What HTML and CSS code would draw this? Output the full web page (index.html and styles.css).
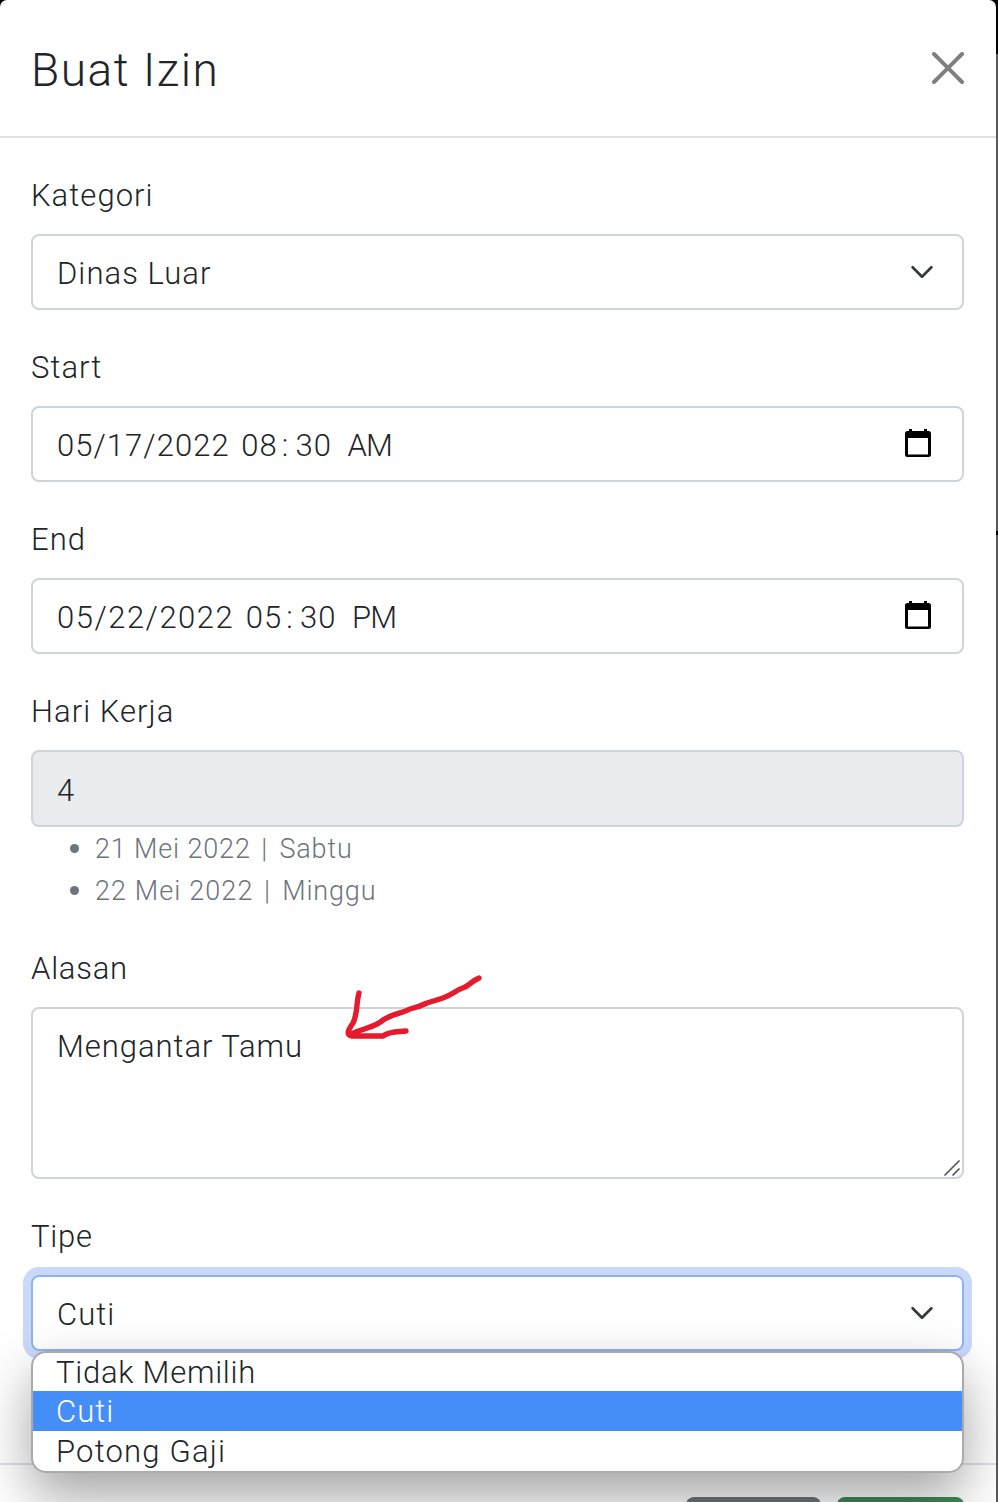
FILE: index.html
```html
<!DOCTYPE html>
<html lang="id">
<head>
<meta charset="utf-8">
<title>Buat Izin</title>
<link rel="stylesheet" href="styles.css">
</head>
<body>
<div class="backdrop">
  <div class="modal">
    <div class="modal-header">
      <h1 class="modal-title">Buat Izin</h1>
      <svg class="close" width="32" height="32" viewBox="0 0 16 16"><path d="M.293.293a1 1 0 0 1 1.414 0L8 6.586 14.293.293a1 1 0 1 1 1.414 1.414L9.414 8l6.293 6.293a1 1 0 0 1-1.414 1.414L8 9.414l-6.293 6.293a1 1 0 0 1-1.414-1.414L6.586 8 .293 1.707a1 1 0 0 1 0-1.414z"/></svg>
    </div>
    <div class="modal-body">
      <div class="group">
        <div class="label"><span>Kategori</span></div>
        <div class="control"><span>Dinas Luar</span>
          <svg class="chevron" width="32" height="24" viewBox="0 0 16 12"><path d="M3.300 3.650l4.700 4.700 4.700-4.700"/></svg></div>
      </div>
      <div class="group">
        <div class="label"><span>Start</span></div>
        <div class="control"><span><span class="date-part">05/17/2022</span> 08<span class="colon">:</span>30 <span class="meridiem">AM</span></span>
          <svg class="calendar" width="26" height="28" viewBox="0 0 26 28"><path fill-rule="evenodd" d="M4 0h3v2h12V0h3v2h1.500a2.500 2.500 0 0 1 2.500 2.500v21a2.500 2.500 0 0 1-2.500 2.500h-21A2.500 2.500 0 0 1 0 25.500v-21A2.500 2.500 0 0 1 2.500 2H4zM3 9v16.500h20V9z"/></svg></div>
      </div>
      <div class="group">
        <div class="label"><span>End</span></div>
        <div class="control"><span><span class="date-part date-end">05/22/2022</span> 05<span class="colon">:</span>30 <span class="meridiem">PM</span></span>
          <svg class="calendar" width="26" height="28" viewBox="0 0 26 28"><path fill-rule="evenodd" d="M4 0h3v2h12V0h3v2h1.500a2.500 2.500 0 0 1 2.500 2.500v21a2.500 2.500 0 0 1-2.500 2.500h-21A2.500 2.500 0 0 1 0 25.500v-21A2.500 2.500 0 0 1 2.500 2H4zM3 9v16.500h20V9z"/></svg></div>
      </div>
      <div class="group">
        <div class="label"><span>Hari Kerja</span></div>
        <div class="control readonly"><span>4</span></div>
        <ul class="days">
          <li>21 Mei 2022 <span class="bar">|</span> Sabtu</li>
          <li><span class="day-wide">22 Mei 2022</span> <span class="bar">|</span> Minggu</li>
        </ul>
      </div>
      <div class="group">
        <div class="label"><span class="snug">Alasan</span></div>
        <div class="control area"><span class="reason">Mengantar Tamu</span>
          <svg class="grip" width="18" height="18" viewBox="0 0 18 18"><path d="M1.500 16.500l15-15M9.500 16.500l7-7"/></svg>
          <svg class="arrow" width="140" height="70" viewBox="0 0 140 70"><path d="M134 8C127 11 126 14 120 17C111 20 107 25 98 28L82 33C76 36 73 37 65 39C58 43 47 44 38 50C31 57 19 58 6 64M14 23C11 33 13 43 8 53C4 59 0 65 7 66H38C45 61 52 62 61 61"/></svg>
        </div>
      </div>
      <div class="group">
        <div class="label"><span class="snug">Tipe</span></div>
        <div class="control focus"><span>Cuti</span>
          <svg class="chevron" width="32" height="24" viewBox="0 0 16 12"><path d="M3.300 3.650l4.700 4.700 4.700-4.700"/></svg>
          <div class="menu">
            <div class="option"><span class="snug">Tidak Memilih</span></div>
            <div class="option selected"><span>Cuti</span></div>
            <div class="option"><span class="wide">Potong Gaji</span></div>
          </div>
        </div>
      </div>
    </div>
    <div class="modal-footer">
      <div class="button cancel"></div>
      <div class="button save"></div>
    </div>
  </div>
  <div class="edge"><div class="edge-top"></div><div class="edge-mark"></div></div>
</div>
</body>
</html>
```
FILE: styles.css
```css
* { box-sizing: border-box; }
body { margin: 0; background: #000; }
.backdrop { display: flex; width: 998px; height: 1502px; overflow: hidden; color: #212529; font: 300 31px/48px Roboto, "Open Sans", sans-serif; letter-spacing: 1.05px; white-space: nowrap; }
.modal { width: 996px; height: 1530px; flex: none; display: flex; flex-direction: column; background: #fff; border-radius: 7px 7px 0 0; }
.modal-header { height: 138px; flex: none; display: flex; justify-content: space-between; align-items: center; padding: 0 32px 0 31px; border-bottom: 2px solid #dee2e6; }
.modal-title { margin: 0; padding-top: 4px; font-size: 46px; font-weight: 300; line-height: 60px; letter-spacing: 1.55px; }
.close { fill: #808080; }
.modal-body { height: 1325px; flex: none; padding: 32px 32px 0 31px; }
.group { margin-bottom: 32px; }
.label { height: 48px; margin-bottom: 16px; padding-top: 2px; }
.control { position: relative; height: 76px; display: flex; align-items: center; justify-content: space-between; padding: 3px 24px 0; border: 2px solid #ced4da; border-radius: 8px; }
.chevron { margin-top: -4px; fill: none; stroke: #343a40; stroke-width: 1.35; stroke-linecap: round; stroke-linejoin: round; }
.calendar { margin: -5px 7px 0 0; fill: #000; }
.date-part { margin-right: 3px; }
.date-end { letter-spacing: 1.5px; }
.wide { letter-spacing: 1.2px; }
.colon { margin: 0 6px 0 4px; }
.meridiem { margin-left: 7px; letter-spacing: -.8px; }
.snug { letter-spacing: .75px; }
.reason { letter-spacing: .95px; }
.readonly { height: 77px; background: #e9ebef; padding-top: 4px; }
.days { margin: 0; padding: 0 0 0 64px; color: #6c757d; font-size: 27px; line-height: 42px; letter-spacing: .85px; list-style: none; }
.days li { position: relative; height: 42px; padding-top: 1px; }
.days li::before { content: ""; position: absolute; left: -25px; top: 17px; width: 9px; height: 9px; border-radius: 50%; background: #6c757d; }
.day-wide { letter-spacing: 1.1px; }
.bar { margin: 0 4px 0 3px; }
.area { height: 172px; align-items: flex-start; padding-top: 14px; }
.grip { position: absolute; right: 1px; bottom: 0; fill: none; stroke: #505254; stroke-width: 1.6; }
.arrow { position: absolute; left: 312px; top: -39px; fill: none; stroke: #e6192d; stroke-width: 5.4; stroke-linecap: round; stroke-linejoin: round; }
.focus { border-color: #8bb3f7; box-shadow: 0 0 0 8px #cad8fb; }
.menu { position: absolute; left: -2px; top: 74px; width: 933px; height: 122px; background: #fff; border: 2px solid #aaa; border-radius: 15px; box-shadow: 0 24px 54px rgba(0,0,0,.36); display: flex; flex-direction: column; justify-content: flex-end; }
.option { height: 40px; flex: none; padding: 1px 23px 0; line-height: 40px; }
.option:first-child { height: 38px; line-height: 38px; }
.selected { background: #468ef7; color: #fff; }
.modal-footer { flex: 1; display: flex; justify-content: flex-end; align-items: flex-start; gap: 16px; padding: 32px 32px 0; border-top: 2px solid #dee2e6; }
.button { height: 76px; border-radius: 8px; }
.cancel { width: 135px; background: #6c757d; }
.save { width: 127px; background: #3f8a58; }
.edge { width: 2px; height: 1502px; background: #58595a; }
.edge-top { height: 54px; background: #000; }
.edge-mark { height: 4px; margin-top: 477px; background: #000; }
```
